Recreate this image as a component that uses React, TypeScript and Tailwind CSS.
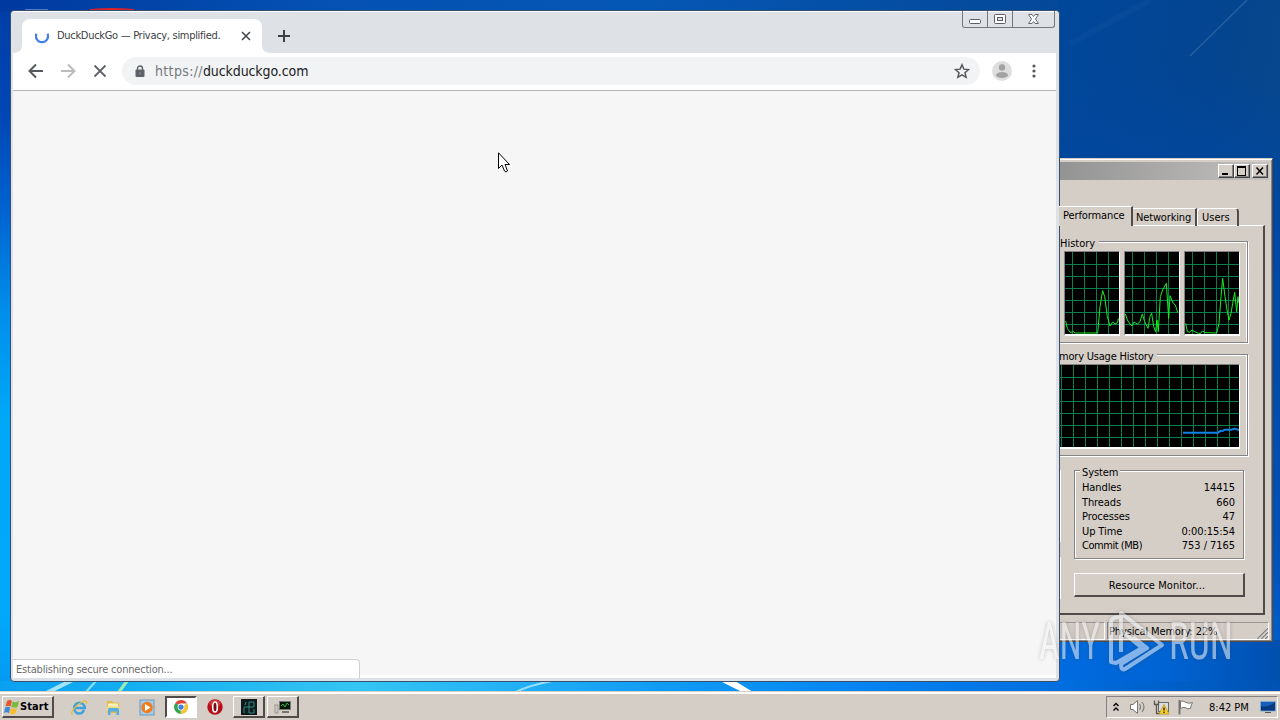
import type { ReactNode } from "react";

interface GraphProps {
  width: number;
  height: number;
  gridX: number;
  points: string;
  stroke: string;
  strokeWidth?: number;
}

// points are given in thirds of a pixel
const Graph = ({
  width,
  height,
  gridX,
  points,
  stroke,
  strokeWidth = 3,
}: GraphProps) => {
  const columns: number[] = [];
  const rows: number[] = [];
  for (let x = gridX; x < width; x += 12) columns.push(x);
  for (let y = 12; y < height; y += 12) rows.push(y);

  return (
    <svg
      width={width}
      height={height}
      viewBox={`0 0 ${width * 3} ${height * 3}`}
      className="block bg-black"
    >
      <g stroke="#087f4c" strokeWidth={3} shapeRendering="crispEdges">
        {columns.map((x) => (
          <path key={x} d={`M${x * 3 + 1.5} 0V${height * 3}`} />
        ))}
        {rows.map((y) => (
          <path key={y} d={`M0 ${y * 3 + 1.5}H${width * 3}`} />
        ))}
      </g>
      <polyline
        points={points}
        fill="none"
        stroke={stroke}
        strokeWidth={strokeWidth}
      />
    </svg>
  );
};

const cpuGraphs = [
  "2,207 7,229 15,241 25,239 31,243 98,243 105,164 113,116 119,134 127,194 135,222 143,210 150,216 158,212 160,199",
  "1,186 7,204 15,216 21,222 27,210 37,216 45,209 52,186 59,209 69,229 75,194 80,184 86,224 92,239 96,204 100,239 106,134 113,114 124,94 131,199 135,131 145,154 151,159 158,181",
  "2,214 7,239 15,241 21,234 29,239 40,244 47,244 52,237 60,242 95,243 102,214 108,134 113,79 120,134 126,174 132,204 138,184 143,154 149,121 155,179 159,134 162,154",
];

const systemRows = [
  { label: "Handles", value: "14415", tracking: "tracking-[-0.1px]" },
  { label: "Threads", value: "660", tracking: "tracking-[-0.1px]" },
  { label: "Processes", value: "47", tracking: "tracking-[-0.1px]" },
  { label: "Up Time", value: "0:00:15:54", tracking: "tracking-[-0.1px]" },
  { label: "Commit (MB)", value: "753 / 7165", tracking: "tracking-[-0.45px]" },
];

const Wallpaper = () => (
  <div className="absolute inset-0 bg-[linear-gradient(180deg,#003da5_0%,#0048b6_17%,#0065d2_30%,#008eea_43%,#00a8f8_58%,#00a9fa_85%,#0794ef_100%)]">
    <div className="absolute inset-x-0 top-0 h-3 bg-[linear-gradient(90deg,#0039a0,#0451b3_25%,#0557b5_50%,#04499b_80%,#0b4c88)]" />
    <div className="absolute right-0 top-0 h-[692px] w-[222px] bg-[linear-gradient(100deg,#00479b_0%,#044590_50%,#0d4a83_100%)]" />
    <div className="absolute right-0 top-[60px] h-[632px] w-[222px] bg-[linear-gradient(180deg,#00479800,#0047a0_25%,#0050b4_75%,#0063d2_100%)]" />
    <div className="absolute right-0 top-[640px] h-[52px] w-[222px] bg-[linear-gradient(90deg,#006be0,#0063d3_50%,#004fae)]" />
    <div className="absolute inset-x-0 top-[681px] h-[11px] bg-[linear-gradient(90deg,#0aa0f0_0%,#16b2f2_12%,#35c5f2_28%,#28b6f5_37%,#0f9bf5_52%,#0787f2_66%,#006fe2_82%,#0052b2_100%)]" />
    <svg className="absolute inset-0" width="1280" height="720">
      <path d="M44 692L66 681H75L53 692Z" fill="#a5e4f8" />
      <path d="M86 692L96 681" stroke="#8fdcf8" strokeWidth="2" />
      <path d="M117 692L125 681H129L121 692Z" fill="#9fe8b8" />
      <path d="M516 692Q530 685 552 681" stroke="#9be0fb" strokeWidth="2" fill="none" />
      <path d="M720 681H735L753 692H742Z" fill="#fff" />
      <path d="M1190 56L1247 0" stroke="#507fb0" strokeOpacity=".45" strokeWidth="1.5" />
      <path d="M1070 44L1150 0" stroke="#356fae" strokeOpacity=".12" strokeWidth="6" />
      <path d="M90 11V9Q112 7 134 9V11Z" fill="#d8232a" />
      <path d="M25 10H48" stroke="#9cb4dc" strokeWidth="1" />
    </svg>
  </div>
);

const GroupBox = ({
  legend,
  className,
  legendClass,
  children,
}: {
  legend: string;
  className: string;
  legendClass: string;
  children: ReactNode;
}) => (
  <div
    className={`relative border-y border-r border-[#848284] shadow-[1px_1px_0_white,inset_-1px_1px_0_white] ${className}`}
  >
    <span
      className={`absolute h-3.5 whitespace-nowrap bg-[#d5cec7] leading-[14px] ${legendClass}`}
    >
      {legend}
    </span>
    {children}
  </div>
);

const TitleButton = ({ children }: { children: ReactNode }) => (
  <div className="flex h-3.5 w-4 items-center justify-center border border-b-[#404040] border-l-white border-r-[#404040] border-t-white bg-[#d5cec7] shadow-[inset_-1px_-1px_0_#848284]">
    {children}
  </div>
);

const TaskManager = () => (
  <div className="absolute left-[1059px] top-[158px] flex h-[484px] w-[214px] flex-col border-b border-r border-[#504a48] border-t border-t-[#d5cec7] bg-[#d5cec7] text-[11px] text-black shadow-[inset_0_1px_0_white,inset_-1px_-1px_0_#8a8480]">
    <div className="mr-[3px] mt-[3px] flex h-[18px] items-center justify-end bg-[linear-gradient(90deg,#939393,#c3c1bf)] pr-px">
      <TitleButton>
        <svg width="10" height="10">
          <path d="M1 8H7" stroke="#000" strokeWidth="2" />
        </svg>
      </TitleButton>
      <TitleButton>
        <svg width="10" height="10" shapeRendering="crispEdges">
          <path d="M.5 1V9.5H8.5V1" stroke="#000" fill="none" />
          <path d="M0 1H9" stroke="#000" strokeWidth="2" />
        </svg>
      </TitleButton>
      <div className="w-0.5" />
      <TitleButton>
        <svg width="10" height="10">
          <path d="M1.5 1.5L8 8.5M8 1.5L1.5 8.5" stroke="#000" strokeWidth="1.5" />
        </svg>
      </TitleButton>
    </div>

    {/* Tabs */}
    <div className="relative z-10 mt-[26px] flex h-5 items-end">
      <div className="h-5 w-[74px] border-r-2 border-t border-r-[#504a48] border-t-white bg-[#d5cec7] pl-1 leading-[17px] tracking-[-0.1px]">
        Performance
      </div>
      <div className="h-[18px] w-[64px] border-r-2 border-t border-r-[#504a48] border-t-white pl-[3px] leading-[17px] tracking-[-0.15px]">
        Networking
      </div>
      <div className="h-[18px] w-[42px] rounded-t-sm border-l border-r-2 border-t border-l-white border-r-[#504a48] border-t-white pl-1 leading-[17px]">
        Users
      </div>
    </div>

    <div className="relative -mt-px mr-[7px] h-[390px] border-b-2 border-r-2 border-t border-b-[#504a48] border-r-[#504a48] border-t-white">
      <div className="absolute left-0 top-0 h-px w-[73px] -translate-y-px bg-[#d5cec7]" />
      <GroupBox
        legend="History"
        className="mt-[15px] h-[102px] w-[189px]"
        legendClass="-top-[5px] left-0 pl-px pr-1"
      >
        <div className="ml-[5px] mt-[9px] flex gap-1">
          {cpuGraphs.map((points) => (
            <div
              key={points}
              className="border border-b-2 border-b-white border-l-[#848284] border-r-white border-t-[#848284]"
            >
              <Graph width={54} height={82} gridX={7} points={points} stroke="#18ee20" />
            </div>
          ))}
        </div>
      </GroupBox>
      <GroupBox
        legend="mory Usage History"
        className="mt-[11px] h-[102px] w-[189px]"
        legendClass="-top-[5px] left-0 pr-1 tracking-[-0.2px]"
      >
        <div className="mt-[9px] w-[181px] border-b-2 border-r border-t border-b-white border-r-white border-t-[#848284]">
          <Graph
            width={180}
            height={82}
            gridX={2}
            points="372,203 477,203 484,198 492,197 497,194 517,194 527,191 532,193 540,195"
            stroke="#0f82e8"
            strokeWidth={6}
          />
        </div>
      </GroupBox>

      <div className="mt-[14px] flex">
        <div className="w-[15px]">
          <div className="h-[72px] w-0.5 bg-white" />
          <div className="mt-[15px] h-[42px] w-0.5 bg-white" />
        </div>
        <div>
          <GroupBox
            legend="System"
            className="h-[89px] w-[170px] border-l shadow-[1px_1px_0_white,inset_1px_1px_0_white]"
            legendClass="-top-[5px] left-[5px] px-0.5 tracking-[-0.1px]"
          >
            <div className="pl-[7px] pr-2 pt-[9px]">
              {systemRows.map((row) => (
                <div
                  key={row.label}
                  className="flex h-[14.6px] justify-between leading-[15px]"
                >
                  <span className={row.tracking}>{row.label}</span>
                  <span className="tracking-[-0.05px]">{row.value}</span>
                </div>
              ))}
            </div>
          </GroupBox>
          <div className="mt-[14px] flex h-6 w-[171px] items-center justify-center border border-b-2 border-r-2 border-b-[#504a48] border-l-white border-r-[#504a48] border-t-white pr-1 pt-[3px] tracking-[0.1px]">
            Resource Monitor...
          </div>
        </div>
      </div>
    </div>

    {/* Status bar */}
    <div className="mr-[3px] mt-[7px] flex h-[18px] gap-0.5 leading-[17px]">
      <div className="w-[46px] border-b border-r border-t border-b-white border-r-white border-t-[#9a9590]" />
      <div className="relative flex-1 border border-b-white border-l-[#848284] border-r-white border-t-[#9a9590] pl-px tracking-[-0.15px]">
        Physical Memory: 22%
        <svg className="absolute bottom-0 right-0" width="13" height="13">
          <path d="M1 13L13 1M5 13L13 5M9 13L13 9" stroke="#fff" />
          <path d="M2 13L13 2M6 13L13 6M10 13L13 10" stroke="#848284" strokeWidth="1.4" />
        </svg>
      </div>
    </div>
  </div>
);

const Browser = () => (
  <div className="absolute left-[10px] top-[10px] flex h-[672px] w-[1050px] flex-col rounded-[4px] border border-[#35506f] bg-[#dee1e6] pb-[3px] pl-0.5 pr-[3px] shadow-[inset_0_1px_0_white]">
    <div className="flex h-[42px] shrink-0 items-end">
      <svg width="9" height="8">
        <path d="M0 8Q9 8 9 0V8Z" fill="#fff" />
      </svg>
      <div className="flex h-[34px] w-60 items-center rounded-t-lg bg-white pl-[13px] pr-2.5">
        <svg width="14" height="14" viewBox="0 0 14 14" className="mt-px">
          <path
            d="M1.5 3.8A6 6 0 1 0 12.500 3.800"
            fill="none"
            stroke="#3f7de8"
            strokeWidth="2.2"
          />
        </svg>
        <span className="ml-2 w-[166px] whitespace-nowrap pt-px text-[11px] tracking-[-0.3px] text-[#3c4043]">
          DuckDuckGo — Privacy, simplified.
        </span>
        <svg className="ml-auto" width="12" height="12">
          <path d="M2 2L10 10M10 2L2 10" stroke="#46494d" strokeWidth="1.6" />
        </svg>
      </div>
      <svg width="8" height="8">
        <path d="M0 0Q0 8 8 8H0Z" fill="#fff" />
      </svg>
      <svg className="mb-[11px] ml-2" width="12" height="12">
        <path d="M6 0V12M0 6H12" stroke="#3c4043" strokeWidth="2" />
      </svg>
      {/* Caption buttons */}
      <div className="ml-auto mr-px flex h-[17px] w-[93px] self-start rounded-b-[3px] border border-t-0 border-[#74777c]">
        <div className="w-[25px] border-r border-[#74777c]">
          <svg width="24" height="16">
            <rect x="6.5" y="8.5" width="11" height="4" rx="1" fill="#fff" stroke="#5b5e66" />
          </svg>
        </div>
        <div className="w-[25px] border-r border-[#74777c]">
          <svg width="24" height="16">
            <rect x="6.5" y="3.5" width="11" height="9" rx="1" fill="#fff" stroke="#5b5e66" />
            <rect x="9.5" y="6.5" width="5" height="3" fill="#dee1e6" stroke="#5b5e66" />
          </svg>
        </div>
        <div className="flex-1">
          <svg width="41" height="16">
            <path
              d="M15.500 3.500H19L20.500 5.500L22 3.500H25.500L22.500 8L25.500 12.500H22L20.500 10.500L19 12.500H15.500L18.500 8Z"
              fill="#fff"
              stroke="#696c73"
            />
          </svg>
        </div>
      </div>
    </div>

    {/* Toolbar */}
    <div className="flex h-[38px] shrink-0 items-center border-b border-[#b4b5b7] bg-white pb-px pl-[15px] pr-5">
      <svg width="16" height="16" className="shrink-0">
        <path d="M15 8H2M8 1.500L1.500 8L8 14.500" fill="none" stroke="#55585c" strokeWidth="2" />
      </svg>
      <svg width="16" height="16" className="ml-4 shrink-0">
        <path d="M1 8H14M8 1.500L14.500 8L8 14.500" fill="none" stroke="#babcbe" strokeWidth="2" />
      </svg>
      <svg width="16" height="16" className="ml-4 shrink-0">
        <path d="M2.500 2.500L13.500 13.500M13.500 2.500L2.500 13.500" stroke="#5f6368" strokeWidth="1.800" />
      </svg>
      <div className="ml-[14px] flex h-7 flex-1 items-center rounded-full bg-[#f1f3f4] pl-[13px] pr-2.5">
        <svg width="10" height="13" className="shrink-0">
          <path d="M2.500 6V3.500A2.500 2.500 0 0 1 7.500 3.500V6" fill="none" stroke="#5f6368" strokeWidth="1.400" />
          <rect x=".5" y="4.500" width="9" height="7.500" rx="1" fill="#5f6368" />
          <circle cx="5" cy="8.300" r="1" fill="#85898c" />
        </svg>
        <span className="ml-[10px] text-[14px] text-[#202124]">
          <span className="tracking-[0.35px] text-[#767a7e]">https://</span>
          <span className="tracking-[-0.1px]">duckduckgo.com</span>
        </span>
        <svg width="16" height="16" viewBox="0 0 24 24" className="ml-auto shrink-0">
          <path
            d="M12 2.600L14.800 9.200L22 9.800L16.500 14.500L18.200 21.500L12 17.800L5.800 21.500L7.500 14.500L2 9.800L9.200 9.200Z"
            fill="none"
            stroke="#55585c"
            strokeWidth="2.200"
          />
        </svg>
      </div>
      <svg width="20" height="20" className="ml-3 shrink-0">
        <circle cx="10" cy="10" r="10" fill="#dedede" />
        <circle cx="10" cy="6.500" r="3.200" fill="#a2a2a2" />
        <ellipse cx="10" cy="14" rx="6" ry="3" fill="#a2a2a2" />
      </svg>
      <svg width="4" height="14" className="ml-5 shrink-0" fill="#55585c">
        <circle cx="2" cy="2" r="1.600" />
        <circle cx="2" cy="7" r="1.600" />
        <circle cx="2" cy="12" r="1.600" />
      </svg>
    </div>

    {/* Page */}
    <div className="flex flex-1 items-end border-b-[3px] border-white bg-[#f6f6f6]">
      <div className="-mb-[3px] h-[19px] w-[347px] rounded-tr-[4px] border-r border-t border-[#d0d0d0] bg-white pl-[3px] text-[11px] leading-[19px] tracking-[-0.2px] text-[#6b6b6b]">
        Establishing secure connection...
      </div>
    </div>
  </div>
);

const Watermark = () => (
  <svg
    className="absolute left-[1036px] top-[606px] drop-shadow-[0_0_2px_rgba(60,60,60,0.5)]"
    width="200"
    height="70"
    opacity=".55"
  >
    <g fill="#f4f4f4" fontFamily="Roboto, sans-serif" fontSize="52">
      <text x="3" y="53" textLength="61" lengthAdjust="spacingAndGlyphs">
        ANY
      </text>
      <text x="133" y="53" textLength="64" lengthAdjust="spacingAndGlyphs">
        RUN
      </text>
    </g>
    <g fill="none" stroke="#f0f4fa" strokeWidth="4" strokeLinejoin="round">
      <path d="M85 46V7L126 39L89 63Q85 65 85 58L111 42L97 31" />
      <path d="M83 11Q75 11 75 17V56L80 57L106 42L87 26" />
    </g>
  </svg>
);

const TaskButton = ({ active, children }: { active?: boolean; children: ReactNode }) => (
  <div
    className={
      active
        ? "flex h-[22px] w-8 items-center justify-center border-2 border-b-white border-l-[#504a48] border-r-white border-t-[#504a48] bg-white pr-px"
        : "flex h-[22px] w-8 items-center justify-center border border-b-2 border-r-2 border-b-[#504a48] border-l-white border-r-[#504a48] border-t-white bg-[#d5cec7]"
    }
  >
    {children}
  </div>
);

const Taskbar = () => (
  <div className="absolute inset-x-0 bottom-0 flex h-[29px] items-center border-t border-[#d5cec7] bg-[#d5cec7] pl-0.5 pr-0.5 pt-0.5 text-[11px] text-black shadow-[inset_0_2px_0_white]">
    <div className="flex h-[22px] w-[52px] items-center border border-b-2 border-r-2 border-b-[#504a48] border-l-white border-r-[#504a48] border-t-white pl-px">
      <svg width="16" height="16" viewBox="0 0 16 16" className="shrink-0">
        <path d="M3 2Q6 0 8 2L6.500 7.500Q4 6 1.500 7.500Z" fill="#e2572b" />
        <path d="M8.700 2.500Q12 4 15 2L13.500 8Q11 9 7.300 8Z" fill="#79b93c" />
        <path d="M1.200 8.500Q4 7 6.200 8.500L5 14Q2 12.500 0 14Z" fill="#3f88d6" />
        <path d="M7 9Q10 10.500 13 9L11.500 14.500Q8 16 5.700 14.500Z" fill="#f7bd31" />
      </svg>
      <span className="pt-0.5 text-[11px] font-bold tracking-[0.1px]">Start</span>
    </div>

    <div className="ml-[17px] flex w-[94px] items-center justify-between pr-[9px]">
      <svg width="17" height="17" viewBox="0 0 17 17" className="shrink-0">
        <path
          d="M13 11Q11.500 14.500 8.500 14.500A5.300 5.300 0 1 1 13.800 9H4"
          fill="none"
          stroke="#3fa4de"
          strokeWidth="2.600"
        />
        <path d="M2 15.500C-2 15 4 6 12 2.500Q17 .5 15 5" fill="none" stroke="#e8bd3b" strokeWidth="1.300" />
      </svg>
      <svg width="17" height="17" viewBox="0 0 17 17" className="shrink-0">
        <path d="M2 2H7L8 3.500H14V14H2Z" fill="#e3bb4c" />
        <path d="M3 4.500H13V9H3Z" fill="#faf0b8" />
        <path d="M1 7.500H15L14 12H2Z" fill="#f0d984" />
        <path d="M3 16V10.500Q3 9 4.500 9H12.500Q14 9 14 10.500V16H11.500V12.500H5.500V16Z" fill="#55aee2" />
      </svg>
      <svg width="17" height="17" viewBox="0 0 17 17" className="shrink-0">
        <rect x="1" y="1" width="14" height="15" fill="#a8cbe5" stroke="#6d9cc0" />
        <circle cx="8" cy="8.500" r="5.700" fill="#f27b1a" />
        <path d="M6 5L11.500 8.500L6 12Z" fill="#fff" />
      </svg>
    </div>
    <TaskButton active>
      <svg width="14" height="14" viewBox="0 0 16 16">
        <path d="M8 8L1.500 3.500A8 8 0 0 1 15 4H8Z" fill="#df4532" />
        <path d="M8 8L15 4A8 8 0 0 1 7.500 16Z" fill="#f6c431" />
        <path d="M8 8L7.500 16A8 8 0 0 1 1.500 3.500Z" fill="#32a350" />
        <circle cx="8" cy="8" r="3.900" fill="#fff" />
        <circle cx="8" cy="8" r="3" fill="#3f7fe0" />
      </svg>
    </TaskButton>
    <svg width="16" height="16" viewBox="0 0 16 16" className="mx-2.5 shrink-0">
      <circle cx="8" cy="8" r="7.700" fill="#b60f19" />
      <ellipse cx="8" cy="4.500" rx="5.500" ry="3.500" fill="#dc4b4b" fillOpacity=".7" />
      <ellipse cx="8" cy="8" rx="2.300" ry="5" fill="#7a0a10" stroke="#fff" strokeWidth="1.600" />
    </svg>
    <TaskButton>
      <svg width="16" height="16">
        <rect width="16" height="16" fill="#10191b" />
        <path d="M3 14V8H8V3M8 3H13V8H8V14H13V10M5 3L4 6" fill="none" stroke="#2d8d87" />
      </svg>
    </TaskButton>
    <div className="w-0.5" />
    <TaskButton>
      <svg width="18" height="16">
        <rect x="1" y="6" width="3" height="8" fill="#c8c8c4" stroke="#86847f" strokeWidth=".7" />
        <rect x="5.500" y="2.500" width="11" height="8" fill="#081808" stroke="#777" />
        <path d="M7 7L9 5L11 8L13 4L15 6" fill="none" stroke="#28b83c" />
        <path d="M8 13H15" stroke="#77746f" strokeWidth="2" />
      </svg>
    </TaskButton>

    {/* Tray */}
    <div className="ml-auto flex h-[22px] w-[172px] items-center border border-b-white border-l-[#848284] border-r-white border-t-[#848284] pl-[5px] pr-px">
      <svg width="8" height="10" className="-mt-px">
        <path d="M1.500 4L4 1.500L6.500 4M1.500 8.500L4 6L6.500 8.500" fill="none" stroke="#000" strokeWidth="1.400" />
      </svg>
      <svg width="17" height="16" className="ml-[9px]">
        <path d="M1.500 5.500H4L8.500 1.500V14.500L4 10.500H1.500Z" fill="#fff" stroke="#77746f" />
        <path d="M10.500 5Q12.500 8 10.500 11M13 3Q17 8 13 13" fill="none" stroke="#807c78" strokeWidth="1.200" />
      </svg>
      <svg width="17" height="16" className="ml-[7px]">
        <rect x="5.500" y="3.500" width="10" height="9" fill="#d9dce0" stroke="#6a6966" />
        <path d="M1.500 1.500V5.500H5.500V1.500M3.500 6V14.500H7" fill="none" stroke="#5a5855" strokeWidth="1.300" />
        <path d="M11 5.500L16 15H6Z" fill="#f9d62b" stroke="#b98d0a" strokeWidth=".7" />
        <path d="M11 8.500V11.500M11 12.500V14" stroke="#000" strokeWidth="1.200" />
      </svg>
      <svg width="17" height="16" className="ml-[7px]">
        <path d="M2.500 1V15.500" stroke="#77746f" strokeWidth="2" />
        <path d="M3.500 2.500Q6 1 9 3.500Q12 5 15.500 3.500Q14 6 13.500 9.500Q10 10.500 8 8.500Q6 8 3.500 9.500Z" fill="#fff" stroke="#77746f" />
      </svg>
      <span className="ml-[15px] w-11 whitespace-nowrap pt-0.5">8:42 PM</span>
      <svg width="16" height="14" className="ml-auto">
        <path d="M.5 1.500H15.500V11H.5Z" fill="#1760b8" stroke="#86a9cf" />
        <path d="M1 6Q8 8 15 2V10.500H1Z" fill="#083b7c" />
        <path d="M5 12.500H11" stroke="#555" />
      </svg>
    </div>
  </div>
);

export default function App() {
  return (
    <div className="relative h-[720px] w-[1280px] overflow-hidden font-['DejaVu_Sans_Condensed','DejaVu_Sans',sans-serif] [font-stretch:condensed]">
      <Wallpaper />
      <TaskManager />
      <Browser />
      <Taskbar />
      <svg className="absolute left-[498px] top-[152px]" width="12" height="21">
        <path
          d="M.5 .8V16.500L4 13L6.500 19Q8 21 9.500 19L7 12.500H11.500Z"
          fill="#fff"
          stroke="#000"
        />
      </svg>
      <Watermark />
    </div>
  );
}
